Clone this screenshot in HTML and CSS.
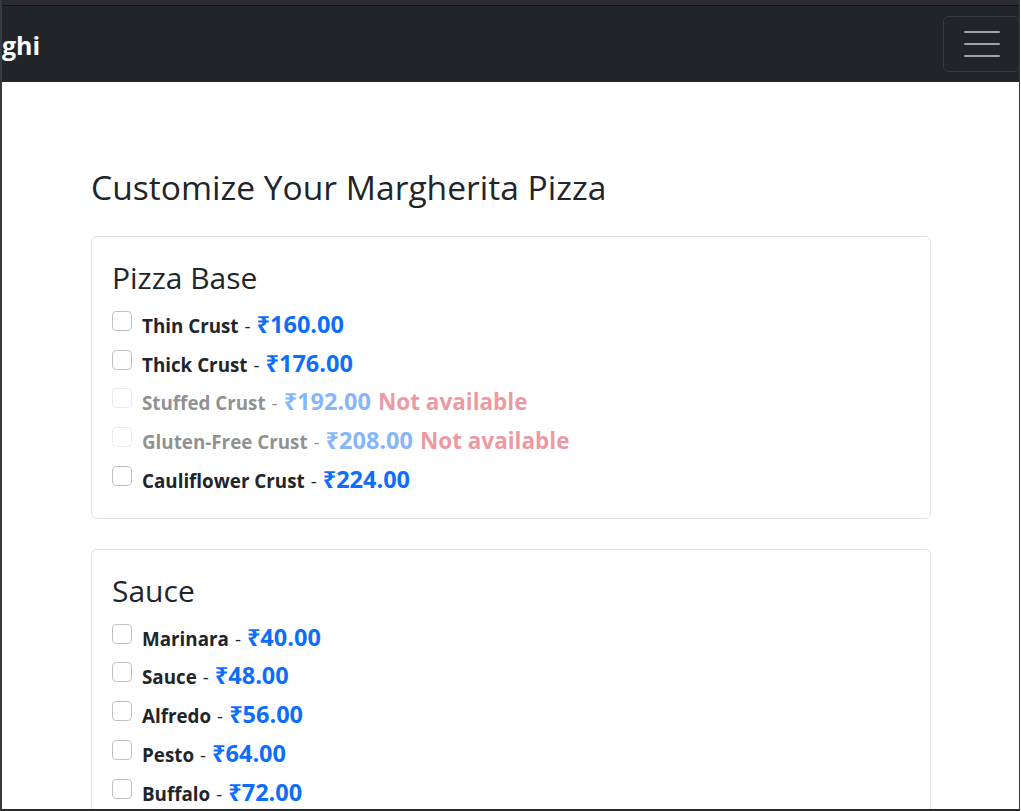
FILE: index.html
```html
<!DOCTYPE html>
<html lang="en">
<head>
<meta charset="utf-8">
<title>Customize Your Margherita Pizza</title>
<link rel="stylesheet" href="styles.css">
</head>
<body>
<div class="window">
  <div class="chrome-top"></div>
  <nav class="navbar">
    <span class="brand">ghi</span>
    <button class="toggler" type="button" aria-label="Toggle navigation">
      <span class="bar"></span><span class="bar"></span><span class="bar"></span>
    </button>
  </nav>
  <main class="container">
    <h2 class="page-title">Customize Your Margherita Pizza</h2>

    <section class="card">
      <h3 class="card-title">Pizza Base</h3>
      <label class="option"><input type="checkbox" class="check"><span class="name">Thin Crust</span><span class="dash">-</span><span class="price">₹160.00</span></label>
      <label class="option"><input type="checkbox" class="check"><span class="name">Thick Crust</span><span class="dash">-</span><span class="price">₹176.00</span></label>
      <label class="option disabled"><input type="checkbox" class="check" disabled><span class="name">Stuffed Crust</span><span class="dash">-</span><span class="price">₹192.00</span><span class="na">Not available</span></label>
      <label class="option disabled"><input type="checkbox" class="check" disabled><span class="name">Gluten-Free Crust</span><span class="dash">-</span><span class="price">₹208.00</span><span class="na">Not available</span></label>
      <label class="option"><input type="checkbox" class="check"><span class="name">Cauliflower Crust</span><span class="dash">-</span><span class="price">₹224.00</span></label>
    </section>

    <section class="card">
      <h3 class="card-title">Sauce</h3>
      <label class="option"><input type="checkbox" class="check"><span class="name">Marinara</span><span class="dash">-</span><span class="price">₹40.00</span></label>
      <label class="option"><input type="checkbox" class="check"><span class="name">Sauce</span><span class="dash">-</span><span class="price">₹48.00</span></label>
      <label class="option"><input type="checkbox" class="check"><span class="name">Alfredo</span><span class="dash">-</span><span class="price">₹56.00</span></label>
      <label class="option"><input type="checkbox" class="check"><span class="name">Pesto</span><span class="dash">-</span><span class="price">₹64.00</span></label>
      <label class="option"><input type="checkbox" class="check"><span class="name">Buffalo</span><span class="dash">-</span><span class="price">₹72.00</span></label>
    </section>
  </main>
</div>
</body>
</html>
```
FILE: styles.css
```css
html, body {
  margin: 0;
  padding: 0;
  background: #ffffff;
  overflow: hidden;
}

body {
  font-family: "Open Sans", "Noto Sans", "DejaVu Sans", sans-serif;
  color: #212529;
}

.window {
  box-sizing: border-box;
  width: 1020px;
  height: 811px;
  border-left: 2px solid #3a3a3a;
  border-right: 1px solid #3a3a3a;
  border-bottom: 2px solid #2a2a2a;
  overflow: hidden;
  background: #ffffff;
}

.chrome-top {
  height: 5px;
  background: #2b2a33;
  border-bottom: 1px solid #141418;
}

.navbar {
  height: 76px;
  background: #212529;
  display: flex;
  align-items: center;
  justify-content: space-between;
}

.brand {
  color: #ffffff;
  font-weight: 700;
  font-size: 25px;
  line-height: 1;
  margin-top: 3px;
}

.toggler {
  box-sizing: border-box;
  width: 77px;
  height: 56px;
  margin-right: -1px;
  background: transparent;
  border: 1px solid #373b3e;
  border-radius: 6px;
  display: flex;
  flex-direction: column;
  align-items: center;
  justify-content: center;
  gap: 9.5px;
  padding: 0;
}

.bar {
  display: block;
  width: 36px;
  height: 2.5px;
  border-radius: 1px;
  background: #a0a2a4;
}

.container {
  padding: 85px 0 0 89px;
  width: 840px;
}

.page-title {
  margin: 0 0 28.5px;
  font-size: 33.6px;
  font-weight: 400;
  line-height: 1.2;
}

.card {
  border: 1px solid #dee2e6;
  border-radius: 6px;
  padding: 23.5px 20px 16px;
  margin-bottom: 30px;
}

.card-title {
  margin: 0 0 11.5px;
  font-size: 30px;
  font-weight: 400;
  line-height: 1.2;
}

.option {
  display: flex;
  align-items: baseline;
  height: 38.75px;
  font-size: 18.8px;
}

.check {
  appearance: none;
  -webkit-appearance: none;
  box-sizing: border-box;
  width: 20px;
  height: 20px;
  margin: 3px 10px 0 0;
  border: 1px solid #bfc2c5;
  border-radius: 4px;
  background: #fff;
  align-self: flex-start;
  flex: none;
}

.name {
  font-weight: 700;
}

.dash {
  margin: 0 6px;
  color: #212529;
}

.price {
  font-weight: 700;
  font-size: 23.5px;
  color: #0d6efd;
}

.na {
  margin-left: 7px;
  font-weight: 700;
  font-size: 22.5px;
  color: #dc3545;
}

.option.disabled {
  opacity: 0.5;
}

.option.disabled .check {
  border-color: #d6d8da;
}
```
